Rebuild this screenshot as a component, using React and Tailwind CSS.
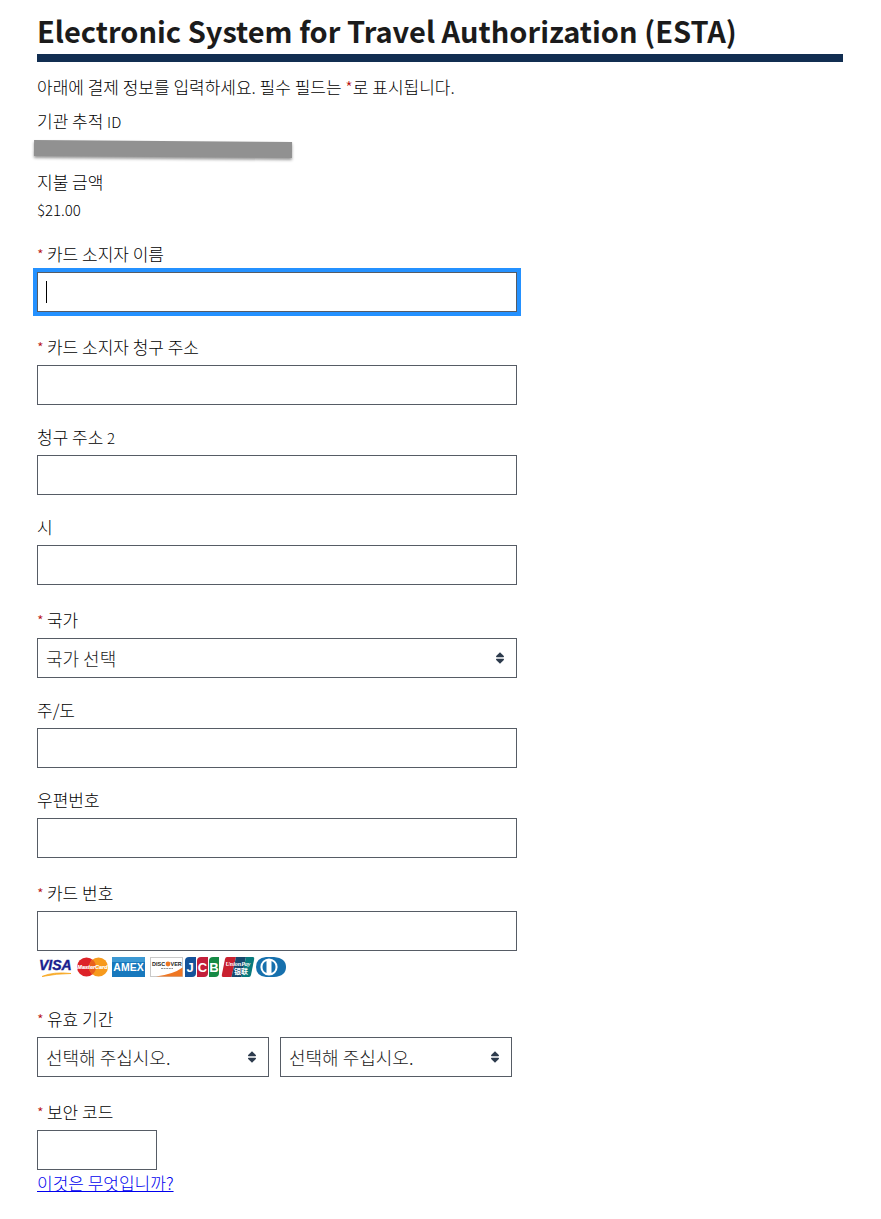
const boxClass = "h-10 border border-[#565c65] bg-white px-2 text-lg text-[#1b1b1b]";

function Label({ htmlFor, required, children }) {
  return (
    <label htmlFor={htmlFor} className="mb-1.5 block leading-6">
      {required && <span className="text-[15px] leading-none text-[#b50909]">* </span>}
      {children}
    </label>
  );
}

function Field({ id, required, children, label }) {
  return (
    <div className={required ? "mt-[23px]" : "mt-5"}>
      <Label htmlFor={id} required={required}>
        {label}
      </Label>
      {children}
    </div>
  );
}

function TextInput({ id, ...props }) {
  return (
    <input
      id={id}
      name={id}
      type="text"
      className={`${boxClass} block w-full max-w-[480px] focus:outline-4 focus:outline-[#2491ff]`}
      {...props}
    />
  );
}

function Select({ id, placeholder, ...props }) {
  return (
    <div className="relative w-full">
      <select id={id} name={id} className={`${boxClass} block w-full appearance-none pr-8`} {...props}>
        <option>{placeholder}</option>
      </select>
      <svg
        viewBox="0 0 10 12"
        className="pointer-events-none absolute top-[14px] right-3 h-3 w-[10px] fill-[#2d3b4d]"
        aria-hidden="true"
      >
        <path d="M5 0.3 L8.8 4.1 Q9.4 5.2 8.4 5.3 H1.6 Q0.6 5.2 1.2 4.1 Z" />
        <path d="M5 11.7 L8.8 7.9 Q9.4 6.8 8.4 6.7 H1.6 Q0.6 6.8 1.2 7.9 Z" />
      </svg>
    </div>
  );
}

function CardLogos() {
  return (
    <svg viewBox="0 0 250 22" className="mt-1.5 mb-7 block h-[22px] w-[250px]" fontFamily="Liberation Sans, sans-serif" role="img">
      {/* Visa */}
      <text x="2" y="13" fontSize="14" fontWeight="700" fontStyle="italic" fill="#1a1f8f" stroke="#1a1f8f" strokeWidth="0.4">
        VISA
      </text>
      <path d="M5 19.5 Q16 14.5 34 16.5 Q20 16.5 5 19.5 Z" fill="#f7a823" stroke="#f7a823" strokeWidth="0.8" />

      {/* MasterCard */}
      <circle cx="49.5" cy="10" r="9.5" fill="#dd2228" />
      <circle cx="61.5" cy="10" r="9.5" fill="#f79a1c" />
      <path d="M55.5 2.6 A9.5 9.5 0 0 1 55.5 17.4 A9.5 9.5 0 0 1 55.5 2.6 Z" fill="#e9601d" />
      <text x="55.5" y="12" fontSize="5.5" fontWeight="700" fontStyle="italic" textAnchor="middle" fill="#fff" stroke="#fff" strokeWidth="0.2">
        MasterCard
      </text>

      {/* American Express */}
      <rect x="75" y="0" width="33" height="20" fill="#1778bd" />
      <rect x="75" y="0" width="33" height="5" fill="#3b98d3" />
      <text x="91.5" y="14" fontSize="10.5" fontWeight="700" textAnchor="middle" fill="#fff">
        AMEX
      </text>

      {/* Discover */}
      <rect x="113.5" y="0.5" width="32" height="19" fill="#fff" stroke="#c9c9c9" />
      <path d="M119 19.5 Q137 17 145.5 10.5 V19.5 Z" fill="#ef7622" />
      <g fontSize="5.5" fontWeight="700" fill="#222">
        <text x="115" y="9">DISC</text>
        <text x="133.5" y="9">VER</text>
      </g>
      <circle cx="131" cy="7" r="2.4" fill="#ef7622" />
      <path d="M124 11.5 H136" stroke="#777" strokeWidth="0.8" strokeDasharray="2 0.6" />

      {/* JCB */}
      <path d="M152 0 H159 V16 Q159 20 155 20 H148 V4 Q148 0 152 0 Z" fill="#14539b" />
      <path d="M164 0 H171 V16 Q171 20 167 20 H160 V4 Q160 0 164 0 Z" fill="#c21f3a" />
      <path d="M176 0 H182 V16 Q182 20 178 20 H172 V4 Q172 0 176 0 Z" fill="#168a45" />
      <g fontSize="13" fontWeight="700" textAnchor="middle" fill="#fff">
        <text x="153" y="14.5">J</text>
        <text x="165.5" y="14.5">C</text>
        <text x="177" y="14.5">B</text>
      </g>

      {/* UnionPay */}
      <path d="M190 0 H199 L194.5 20 H186 Q184.5 20 184.8 18 L188 2 Q188.5 0 190 0 Z" fill="#c9202f" />
      <path d="M199 0 H209 L204.5 20 H194.5 Z" fill="#17486d" />
      <path d="M209 0 H216 Q217.5 0 217.2 2 L214 18 Q213.5 20 212 20 H204.5 Z" fill="#087a7c" />
      <text x="201" y="9" fontSize="6" fontWeight="700" fontStyle="italic" textAnchor="middle" fill="#fff" fontFamily="Liberation Serif, serif">
        UnionPay
      </text>
      <text x="204" y="17" fontSize="7" fontWeight="700" textAnchor="middle" fill="#fff" fontFamily="Noto Sans CJK SC, sans-serif">
        银联
      </text>

      {/* Diners Club */}
      <path d="M229 0 H237 Q249 1 249 10 Q249 19 237 20 H229 Q219 19 219 10 Q219 1 229 0 Z" fill="#1670ad" />
      <circle cx="232" cy="10" r="8.6" fill="#fff" />
      <path d="M229.5 4 A6.5 6.5 0 0 0 229.5 16 Z M234.5 4 A6.5 6.5 0 0 1 234.5 16 Z" fill="#1670ad" />
    </svg>
  );
}

export default function App() {
  return (
    <main className="min-h-screen bg-white pt-2.5 pr-[38px] pb-5 pl-[37px] font-['Noto_Sans_CJK_KR',sans-serif] text-[17px] font-light text-black">
      <h1 className="border-b-8 border-[#112e51] pb-1 text-[29px] leading-10 font-bold text-[#1b1b1b]">
        Electronic System for Travel Authorization (ESTA)
      </h1>

      <p className="mt-[13px] leading-6">
        아래에 결제 정보를 입력하세요. 필수 필드는 <span className="text-[#b50909]">*</span>로 표시됩니다.
      </p>

      <div className="mt-2.5 leading-6">
        기관 추적 <span className="text-[15px] leading-none">ID</span>
      </div>
      <div className="mt-2 -ml-[3px] h-4 w-[258px] rotate-[0.4deg] bg-[#919191] shadow-[0_2px_3px_rgba(0,0,0,0.4)]" />

      <div className="mt-[13px] leading-6">지불 금액</div>
      <div className="mt-1 text-[15px] leading-6">$21.00</div>

      <form className="mt-5" onSubmit={(e) => e.preventDefault()}>
        <Label htmlFor="holder" required>
          카드 소지자 이름
        </Label>
        <div className="relative">
          <TextInput id="holder" autoFocus style={{ caretColor: "transparent" }} />
          <span className="pointer-events-none absolute top-[9px] left-[9px] h-[22px] w-px bg-black" />
        </div>

        <Field id="address" label="카드 소지자 청구 주소" required>
          <TextInput id="address" />
        </Field>
        <Field
          id="address2"
          label={
            <>
              청구 주소 <span className="text-[15px] leading-none">2</span>
            </>
          }
        >
          <TextInput id="address2" />
        </Field>
        <Field id="city" label="시">
          <TextInput id="city" />
        </Field>
        <Field id="country" label="국가" required>
          <div className="max-w-[480px]">
            <Select id="country" placeholder="국가 선택" />
          </div>
        </Field>
        <Field id="state" label="주/도">
          <TextInput id="state" />
        </Field>
        <Field id="zip" label="우편번호">
          <TextInput id="zip" />
        </Field>
        <Field id="card" label="카드 번호" required>
          <TextInput id="card" inputMode="numeric" />
          <CardLogos />
        </Field>

        <Field id="month" label="유효 기간" required>
          <div className="grid max-w-[475px] grid-cols-2 gap-[11px]">
            <Select id="month" placeholder="선택해 주십시오." />
            <Select id="year" placeholder="선택해 주십시오." aria-labelledby="month" />
          </div>
        </Field>

        <Field id="code" label="보안 코드" required>
          <input id="code" name="code" type="text" className={`${boxClass} block w-30`} />
          <a href="#code" className="leading-6 text-[#0000ee] underline">
            이것은 무엇입니까?
          </a>
        </Field>
      </form>
    </main>
  );
}
